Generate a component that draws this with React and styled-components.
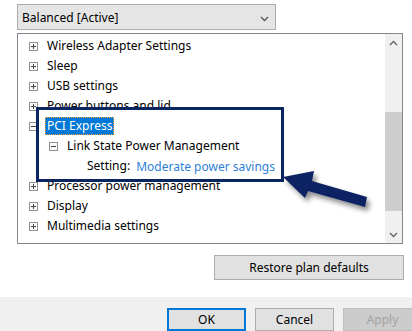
import React from "react";
import styled, { createGlobalStyle } from "styled-components";

const GlobalStyle = createGlobalStyle`
  html, body {
    margin: 0;
    padding: 0;
    background: #ffffff;
  }
  body {
    font-family: "Noto Sans", "Open Sans", Arial, sans-serif;
    font-size: 12px;
    color: #000;
    overflow: hidden;
  }
`;

const Page = styled.div`
  position: relative;
  width: 412px;
  height: 331px;
  overflow: hidden;
  display: flex;
  flex-direction: column;
`;

const Body = styled.div`
  display: flex;
  flex-direction: column;
  align-items: flex-start;
  padding: 4px 0 0 17px;
  height: 297px;
  box-sizing: border-box;
`;

const Combo = styled.div`
  width: 259px;
  height: 26px;
  box-sizing: border-box;
  border: 1px solid #adadad;
  background: #e5e5e5;
  display: flex;
  align-items: center;
  justify-content: space-between;
  padding: 0 6px 0 4px;
`;

const ListBox = styled.div`
  position: relative;
  margin-top: 3px;
  width: 386px;
  height: 211px;
  box-sizing: border-box;
  border: 1px solid #828790;
  background: #fff;
  display: flex;
`;

const Tree = styled.div`
  flex: 1;
  padding-top: 2px;
  display: flex;
  flex-direction: column;
`;

const Row = styled.div`
  height: 20px;
  display: flex;
  align-items: center;
  padding-left: ${(p) => 11 + p.$level * 20}px;
  white-space: nowrap;
`;

const Expander = styled.span`
  width: 9px;
  height: 9px;
  box-sizing: border-box;
  border: 1px solid ${(p) => (p.$empty ? "transparent" : "#919191")};
  background: ${(p) => (p.$empty ? "transparent" : "#fafafa")};
  position: relative;
  margin-right: 7px;
  flex: none;

  &::before,
  &::after {
    content: "";
    position: absolute;
    background: #444;
    display: ${(p) => (p.$empty ? "none" : "block")};
  }
  &::before {
    left: 1px;
    top: 3px;
    width: 5px;
    height: 1px;
  }
  &::after {
    left: 3px;
    top: 1px;
    width: 1px;
    height: 5px;
    display: ${(p) => (p.$open || p.$empty ? "none" : "block")};
  }
`;

const Label = styled.span`
  padding: 0 2px;
  line-height: 18px;
  ${(p) =>
    p.$selected &&
    `
    background: #0078d7;
    color: #fff;
    outline: 1px dotted #f0a030;
    outline-offset: -1px;
  `}
`;

const Value = styled.span`
  color: #2f7fd9;
  margin-left: 4px;
`;

const ScrollBar = styled.div`
  width: 17px;
  background: #f0f0f0;
  display: flex;
  flex-direction: column;
  align-items: stretch;
`;

const ScrollArrow = styled.div`
  height: 17px;
  display: flex;
  align-items: center;
  justify-content: center;
  color: #606060;
`;

const Track = styled.div`
  flex: 1;
  padding: 61px 0 15px;
  display: flex;
`;

const Thumb = styled.div`
  flex: 1;
  background: #cdcdcd;
`;

const Button = styled.button`
  font-family: "Noto Sans", "Open Sans", Arial, sans-serif;
  font-size: 12px;
  color: ${(p) => (p.$disabled ? "#a3a3a3" : "#000")};
  background: ${(p) => (p.$disabled ? "#cccccc" : "#e1e1e1")};
  border: ${(p) => (p.$default ? "2px solid #0078d7" : p.$disabled ? "1px solid #bfbfbf" : "1px solid #adadad")};
  box-sizing: border-box;
  height: ${(p) => p.$height || 23}px;
  width: ${(p) => p.$width || 79}px;
  padding: 0;
  flex: none;
`;

const RestoreRow = styled.div`
  margin-top: 11px;
  margin-left: 197px;
`;

const Footer = styled.div`
  flex: 1;
  background: #f0f0f0;
  display: flex;
  gap: 9px;
  padding: 11px 0 0 167px;
`;

const Callout = styled.div`
  position: absolute;
  left: 36px;
  top: 107px;
  width: 248px;
  height: 75px;
  box-sizing: border-box;
  border: 3px solid #0b2462;
  pointer-events: none;
`;

const ArrowLayer = styled.svg`
  position: absolute;
  left: 0;
  top: 0;
  pointer-events: none;
`;

const items = [
  { level: 0, text: "Wireless Adapter Settings" },
  { level: 0, text: "Sleep" },
  { level: 0, text: "USB settings" },
  { level: 0, text: "Power buttons and lid" },
  { level: 0, text: "PCI Express", open: true, selected: true },
  { level: 1, text: "Link State Power Management", open: true },
  { level: 2, text: "Setting:", value: "Moderate power savings" },
  { level: 0, text: "Processor power management" },
  { level: 0, text: "Display" },
  { level: 0, text: "Multimedia settings" },
];

const Chevron = ({ up }) => (
  <svg width="9" height="6" viewBox="0 0 9 6">
    <path
      d={up ? "M1 5 L4.5 1.5 L8 5" : "M1 1 L4.5 4.5 L8 1"}
      fill="none"
      stroke="currentColor"
      strokeWidth="1.3"
    />
  </svg>
);

export default function App() {
  return (
    <Page>
      <GlobalStyle />
      <Body>
        <Combo>
          <span>Balanced [Active]</span>
          <span style={{ color: "#555" }}>
            <Chevron />
          </span>
        </Combo>
        <ListBox>
          <Tree>
            {items.map((it) => (
              <Row key={it.text} $level={it.level}>
                <Expander $open={it.open} $empty={it.level === 2} />
                <Label $selected={it.selected}>{it.text}</Label>
                {it.value && <Value>{it.value}</Value>}
              </Row>
            ))}
          </Tree>
          <ScrollBar>
            <ScrollArrow>
              <Chevron up />
            </ScrollArrow>
            <Track>
              <Thumb />
            </Track>
            <ScrollArrow>
              <Chevron />
            </ScrollArrow>
          </ScrollBar>
        </ListBox>
        <RestoreRow>
          <Button $width={190} $height={25}>
            Restore plan defaults
          </Button>
        </RestoreRow>
      </Body>
      <Footer>
        <Button $default>OK</Button>
        <Button>Cancel</Button>
        <Button $disabled>Apply</Button>
      </Footer>
      <Callout />
      <ArrowLayer width="412" height="331" viewBox="0 0 412 331">
        <defs>
          <filter id="shadow" x="-20%" y="-40%" width="150%" height="200%">
            <feDropShadow dx="3" dy="4" stdDeviation="2.5" floodColor="#000" floodOpacity="0.45" />
          </filter>
        </defs>
        <polygon
          points="283,177 314,171 312,181 367,197 365,207 308,191 305,198"
          fill="#0b2462"
          filter="url(#shadow)"
        />
      </ArrowLayer>
    </Page>
  );
}
